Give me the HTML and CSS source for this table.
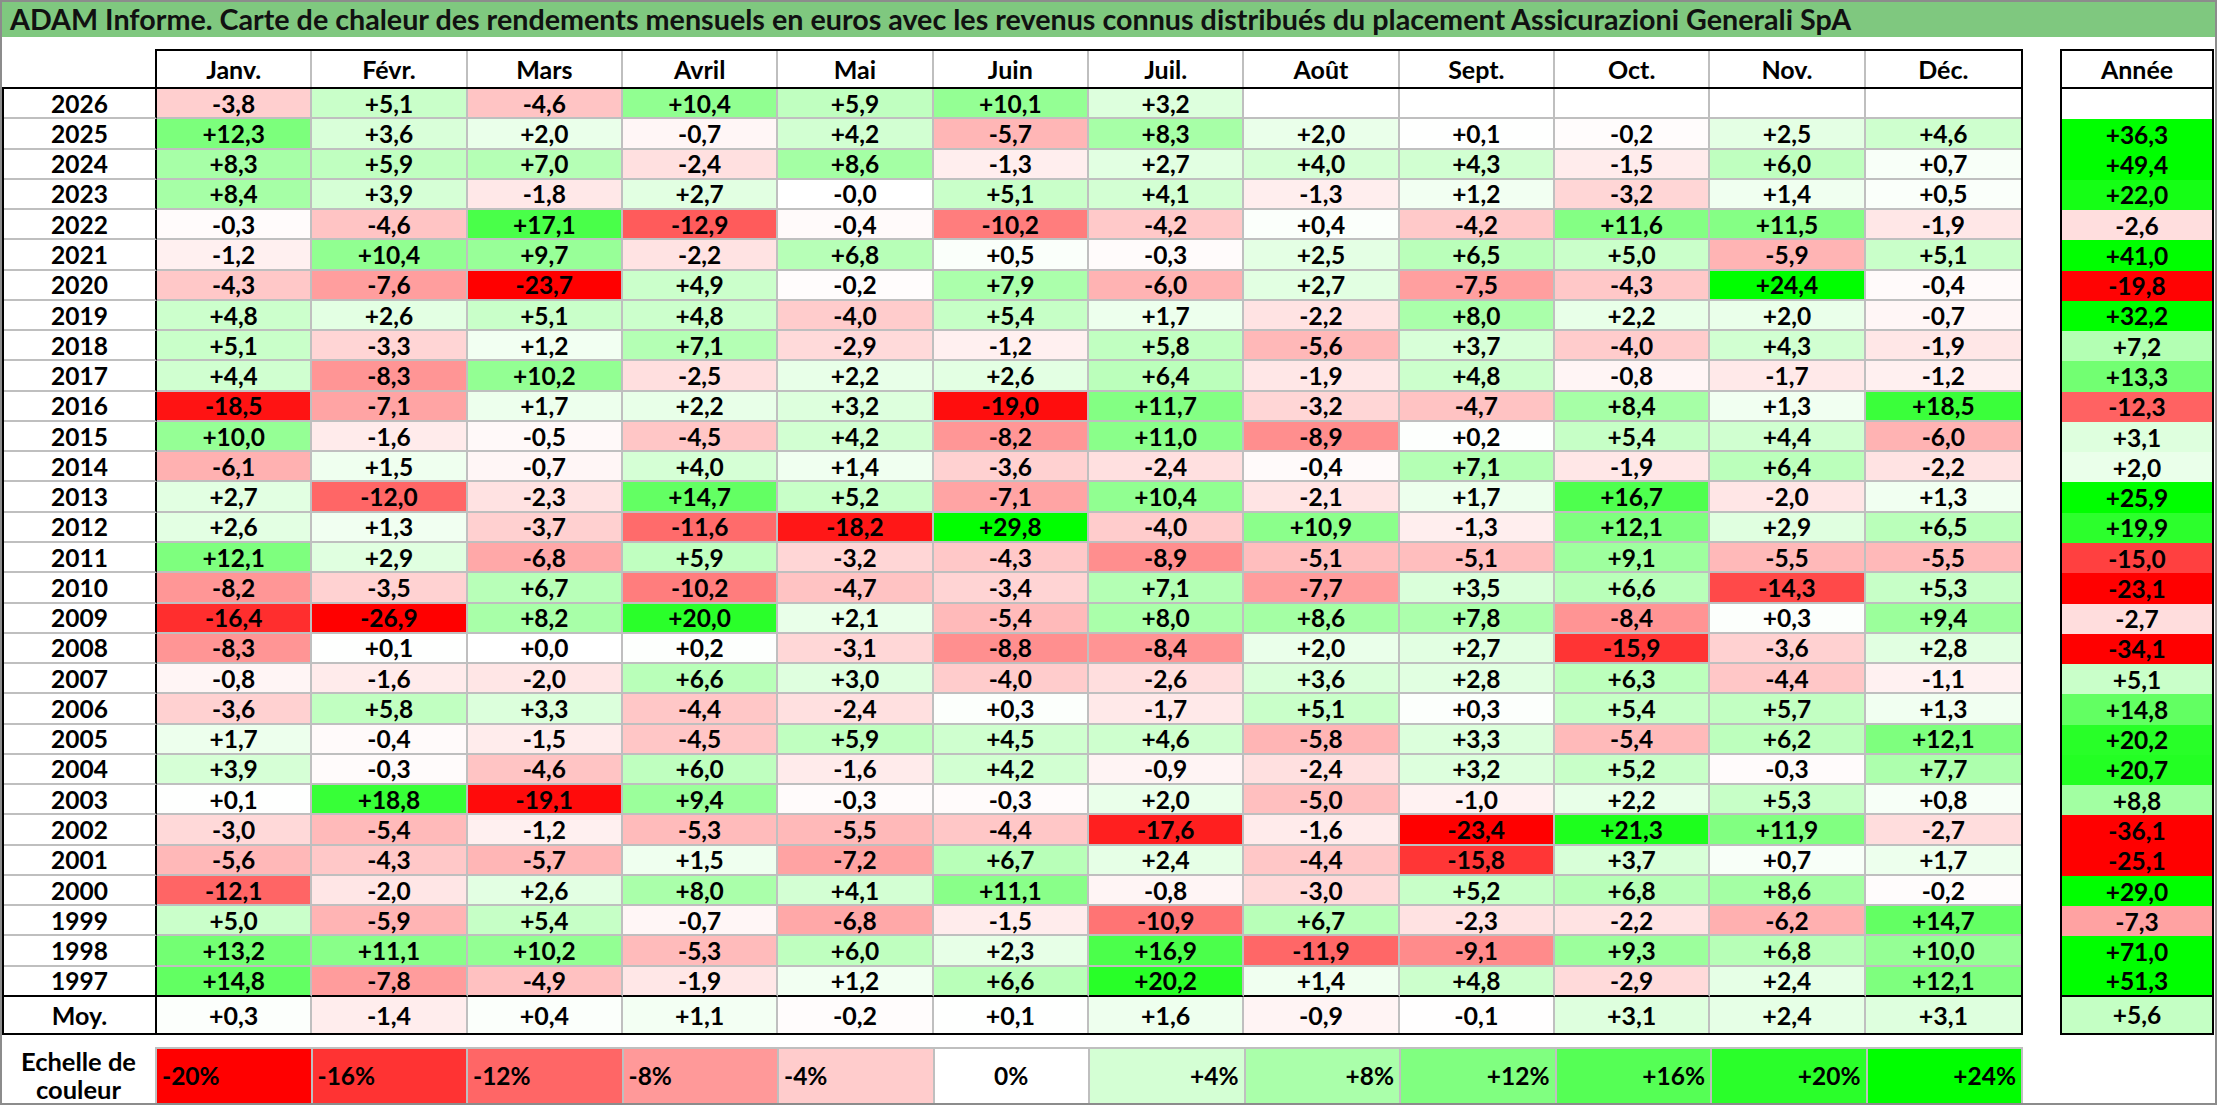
FILE: index.html
```html
<!DOCTYPE html>
<html lang="fr">
<head>
<meta charset="utf-8">
<title>ADAM Informe</title>
<link rel="stylesheet" href="styles.css">
</head>
<body>
<div class="sheet">
  <div class="title">ADAM Informe. Carte de chaleur des rendements mensuels en euros avec les revenus connus distribués du placement Assicurazioni Generali SpA</div>
  <div class="board">
    <div class="main">
      <div class="head">
        <div class="hcell">Janv.</div>
        <div class="hcell">Févr.</div>
        <div class="hcell">Mars</div>
        <div class="hcell">Avril</div>
        <div class="hcell">Mai</div>
        <div class="hcell">Juin</div>
        <div class="hcell">Juil.</div>
        <div class="hcell">Août</div>
        <div class="hcell">Sept.</div>
        <div class="hcell">Oct.</div>
        <div class="hcell">Nov.</div>
        <div class="hcell">Déc.</div>
      </div>
      <div class="body" id="body"></div>
      <div class="legend-row">
        <div class="legend-label">Echelle de<br>couleur</div>
        <div class="legend">
          <div class="lcell neg" style="background:#ff0000">-20%</div>
          <div class="lcell neg" style="background:#ff3333">-16%</div>
          <div class="lcell neg" style="background:#ff6666">-12%</div>
          <div class="lcell neg" style="background:#ff9999">-8%</div>
          <div class="lcell neg" style="background:#ffcccc">-4%</div>
          <div class="lcell zero" style="background:#ffffff">0%</div>
          <div class="lcell pos" style="background:#d4ffd4">+4%</div>
          <div class="lcell pos" style="background:#aaffaa">+8%</div>
          <div class="lcell pos" style="background:#80ff80">+12%</div>
          <div class="lcell pos" style="background:#55ff55">+16%</div>
          <div class="lcell pos" style="background:#2aff2a">+20%</div>
          <div class="lcell pos" style="background:#00ff00">+24%</div>
        </div>
      </div>
    </div>
    <div class="annee" id="annee">
      <div class="acell ahead">Année</div>
    </div>
  </div>
</div>
<script src="script.js"></script>
</body>
</html>
```

FILE: styles.css
```css
* { box-sizing: border-box; }
html, body { margin: 0; padding: 0; background: #ffffff; }
body {
  font-family: Lato, "Noto Sans", "DejaVu Sans", sans-serif;
  font-weight: 700;
  color: #000000;
}
.sheet {
  width: 2217px;
  height: 1105px;
  border: 2px solid #8c8c8c;
  overflow: hidden;
  background: #ffffff;
}
.title {
  height: 35px;
  background: #7fc87f;
  font-size: 28.7px;
  line-height: 35px;
  padding-left: 8px;
  white-space: nowrap;
  color: #111111;
}
.board {
  display: flex;
  align-items: flex-start;
  margin-top: 12px;
}
.main { width: 2021px; flex: none; }
.head {
  margin-left: 153px;
  height: 38px;
  border: 2px solid #000000;
  border-bottom: none;
  display: grid;
  grid-template-columns: repeat(12, 1fr);
}
.hcell {
  border-right: 2px solid #bfbfbf;
  display: flex;
  align-items: center;
  justify-content: center;
  font-size: 25px;
}
.hcell:last-child { border-right: none; }
.body {
  border: 2px solid #000000;
  display: grid;
  grid-template-columns: 153px repeat(12, 1fr);
  grid-template-rows: repeat(30, 30.267px) 36px;
}
.c {
  display: flex;
  align-items: center;
  justify-content: center;
  font-size: 24.5px;
  border-right: 2px solid #bfbfbf;
  border-bottom: 2px solid #bfbfbf;
  white-space: nowrap;
}
.c.yr { border-right-color: #000000; }
.c.nr { border-right: none; }
.c.lb { border-bottom-color: #000000; }
.c.nb { border-bottom: none; font-size: 25px; }
.legend-row {
  display: flex;
  margin-top: 12px;
  height: 56px;
}
.legend-label {
  width: 153px;
  flex: none;
  display: flex;
  align-items: center;
  justify-content: center;
  text-align: center;
  font-size: 25.5px;
  line-height: 28px;
}
.legend {
  flex: 1;
  display: grid;
  grid-template-columns: repeat(12, 1fr);
  border-top: 2px solid #bfbfbf;
  border-left: 2px solid #bfbfbf;
}
.lcell {
  display: flex;
  align-items: center;
  font-size: 24.5px;
  padding: 0 5px;
  border-right: 2px solid #bfbfbf;
}
.lcell.neg { justify-content: flex-start; }
.lcell.zero { justify-content: center; }
.lcell.pos { justify-content: flex-end; }
.annee {
  margin-left: 37px;
  width: 154px;
  flex: none;
  border: 2px solid #000000;
  display: grid;
  grid-template-rows: 38px repeat(30, 30.267px) 36px;
}
.acell {
  display: flex;
  align-items: center;
  justify-content: center;
  font-size: 24.5px;
  white-space: nowrap;
}
.acell.ahead { border-bottom: 2px solid #000000; font-size: 25px; }
.acell.lb { border-bottom: 2px solid #000000; }
```

FILE: script.js
```javascript
var rows = [
["2026","-3,8","+5,1","-4,6","+10,4","+5,9","+10,1","+3,2","","","","","",""],
["2025","+12,3","+3,6","+2,0","-0,7","+4,2","-5,7","+8,3","+2,0","+0,1","-0,2","+2,5","+4,6","+36,3"],
["2024","+8,3","+5,9","+7,0","-2,4","+8,6","-1,3","+2,7","+4,0","+4,3","-1,5","+6,0","+0,7","+49,4"],
["2023","+8,4","+3,9","-1,8","+2,7","-0,0","+5,1","+4,1","-1,3","+1,2","-3,2","+1,4","+0,5","+22,0"],
["2022","-0,3","-4,6","+17,1","-12,9","-0,4","-10,2","-4,2","+0,4","-4,2","+11,6","+11,5","-1,9","-2,6"],
["2021","-1,2","+10,4","+9,7","-2,2","+6,8","+0,5","-0,3","+2,5","+6,5","+5,0","-5,9","+5,1","+41,0"],
["2020","-4,3","-7,6","-23,7","+4,9","-0,2","+7,9","-6,0","+2,7","-7,5","-4,3","+24,4","-0,4","-19,8"],
["2019","+4,8","+2,6","+5,1","+4,8","-4,0","+5,4","+1,7","-2,2","+8,0","+2,2","+2,0","-0,7","+32,2"],
["2018","+5,1","-3,3","+1,2","+7,1","-2,9","-1,2","+5,8","-5,6","+3,7","-4,0","+4,3","-1,9","+7,2"],
["2017","+4,4","-8,3","+10,2","-2,5","+2,2","+2,6","+6,4","-1,9","+4,8","-0,8","-1,7","-1,2","+13,3"],
["2016","-18,5","-7,1","+1,7","+2,2","+3,2","-19,0","+11,7","-3,2","-4,7","+8,4","+1,3","+18,5","-12,3"],
["2015","+10,0","-1,6","-0,5","-4,5","+4,2","-8,2","+11,0","-8,9","+0,2","+5,4","+4,4","-6,0","+3,1"],
["2014","-6,1","+1,5","-0,7","+4,0","+1,4","-3,6","-2,4","-0,4","+7,1","-1,9","+6,4","-2,2","+2,0"],
["2013","+2,7","-12,0","-2,3","+14,7","+5,2","-7,1","+10,4","-2,1","+1,7","+16,7","-2,0","+1,3","+25,9"],
["2012","+2,6","+1,3","-3,7","-11,6","-18,2","+29,8","-4,0","+10,9","-1,3","+12,1","+2,9","+6,5","+19,9"],
["2011","+12,1","+2,9","-6,8","+5,9","-3,2","-4,3","-8,9","-5,1","-5,1","+9,1","-5,5","-5,5","-15,0"],
["2010","-8,2","-3,5","+6,7","-10,2","-4,7","-3,4","+7,1","-7,7","+3,5","+6,6","-14,3","+5,3","-23,1"],
["2009","-16,4","-26,9","+8,2","+20,0","+2,1","-5,4","+8,0","+8,6","+7,8","-8,4","+0,3","+9,4","-2,7"],
["2008","-8,3","+0,1","+0,0","+0,2","-3,1","-8,8","-8,4","+2,0","+2,7","-15,9","-3,6","+2,8","-34,1"],
["2007","-0,8","-1,6","-2,0","+6,6","+3,0","-4,0","-2,6","+3,6","+2,8","+6,3","-4,4","-1,1","+5,1"],
["2006","-3,6","+5,8","+3,3","-4,4","-2,4","+0,3","-1,7","+5,1","+0,3","+5,4","+5,7","+1,3","+14,8"],
["2005","+1,7","-0,4","-1,5","-4,5","+5,9","+4,5","+4,6","-5,8","+3,3","-5,4","+6,2","+12,1","+20,2"],
["2004","+3,9","-0,3","-4,6","+6,0","-1,6","+4,2","-0,9","-2,4","+3,2","+5,2","-0,3","+7,7","+20,7"],
["2003","+0,1","+18,8","-19,1","+9,4","-0,3","-0,3","+2,0","-5,0","-1,0","+2,2","+5,3","+0,8","+8,8"],
["2002","-3,0","-5,4","-1,2","-5,3","-5,5","-4,4","-17,6","-1,6","-23,4","+21,3","+11,9","-2,7","-36,1"],
["2001","-5,6","-4,3","-5,7","+1,5","-7,2","+6,7","+2,4","-4,4","-15,8","+3,7","+0,7","+1,7","-25,1"],
["2000","-12,1","-2,0","+2,6","+8,0","+4,1","+11,1","-0,8","-3,0","+5,2","+6,8","+8,6","-0,2","+29,0"],
["1999","+5,0","-5,9","+5,4","-0,7","-6,8","-1,5","-10,9","+6,7","-2,3","-2,2","-6,2","+14,7","-7,3"],
["1998","+13,2","+11,1","+10,2","-5,3","+6,0","+2,3","+16,9","-11,9","-9,1","+9,3","+6,8","+10,0","+71,0"],
["1997","+14,8","-7,8","-4,9","-1,9","+1,2","+6,6","+20,2","+1,4","+4,8","-2,9","+2,4","+12,1","+51,3"],
["Moy.","+0,3","-1,4","+0,4","+1,1","-0,2","+0,1","+1,6","-0,9","-0,1","+3,1","+2,4","+3,1","+5,6"]
];

function heat(s) {
  if (s === "") return "";
  var v = parseFloat(s.replace(",", "."));
  var t, c;
  if (v < 0) {
    t = Math.min(-v / 20, 1);
    c = Math.round(255 * (1 - t));
    return "rgb(255," + c + "," + c + ")";
  }
  t = Math.min(v / 24, 1);
  c = Math.round(255 * (1 - t));
  return "rgb(" + c + ",255," + c + ")";
}

var body = document.getElementById("body");
var annee = document.getElementById("annee");
var last = rows.length - 1;

rows.forEach(function (r, i) {
  var extra = (i === last - 1) ? " lb" : (i === last ? " nb" : "");
  var y = document.createElement("div");
  y.className = "c yr" + extra;
  y.textContent = r[0];
  body.appendChild(y);
  for (var j = 1; j <= 12; j++) {
    var d = document.createElement("div");
    d.className = "c" + (j === 12 ? " nr" : "") + extra;
    d.textContent = r[j];
    var bg = heat(r[j]);
    if (bg) d.style.background = bg;
    body.appendChild(d);
  }
  var a = document.createElement("div");
  a.className = "acell" + (i === last - 1 ? " lb" : "");
  a.textContent = r[13];
  var abg = heat(r[13]);
  if (abg) a.style.background = abg;
  annee.appendChild(a);
});
```
